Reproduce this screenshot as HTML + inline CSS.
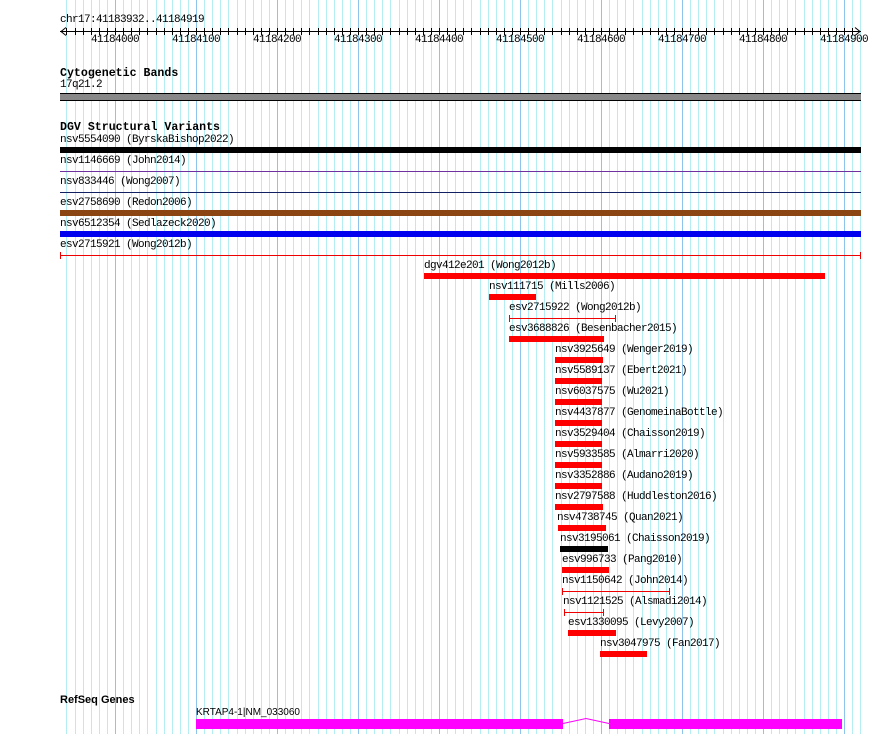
<!DOCTYPE html>
<html><head><meta charset="utf-8"><style>
body{margin:0;background:#fff;width:890px;height:734px;overflow:hidden;position:relative;font-family:"Liberation Mono",monospace;}
svg{position:absolute;left:0;top:0}
.t{position:absolute;font-size:11px;letter-spacing:-0.6px;line-height:11px;color:#000;white-space:pre}
.h{position:absolute;font-size:11.6px;font-weight:bold;line-height:12px;white-space:pre}
</style></head><body>
<svg id="s" width="890" height="734"></svg>
<div id="txt"></div>
<script>
var s=document.getElementById('s'),h='';
function L(x1,y1,x2,y2,c,w){h+='<line x1="'+x1+'" y1="'+y1+'" x2="'+x2+'" y2="'+y2+'" stroke="'+c+'" stroke-width="'+(w||1)+'"/>';}
function R(x,y,w,ht,c){h+='<rect x="'+x+'" y="'+y+'" width="'+w+'" height="'+ht+'" fill="'+c+'"/>';}
for(var k=-6;k<=92;k++){var x=Math.round(115+k*8.1)+0.5;if(x<60||x>862)continue;
 L(x,0,x,734,(k%10==0)?'#8cc4ec':'#b4eef2');}
L(60,31.5,861,31.5,'#000');
for(var k=-6;k<=92;k++){var x=Math.round(115+k*8.1)+0.5;if(x<62||x>860)continue;L(x,28,x,35,'#000');}
h+='<polyline points="66,27.5 61,31.5 66,35.5" fill="none" stroke="#000"/>';
h+='<polyline points="855,27.5 860,31.5 855,35.5" fill="none" stroke="#000"/>';
R(60,93,801,8,'#000');R(60,94,801,6,'#888');
var rows=[
[60,'nsv5554090 (ByrskaBishop2022)',60,861,'thick','#000'],
[60,'nsv1146669 (John2014)',60,861,'line','#7030a0'],
[60,'nsv833446 (Wong2007)',60,861,'line','#102060'],
[60,'esv2758690 (Redon2006)',60,861,'thick','#8b4513'],
[60,'nsv6512354 (Sedlazeck2020)',60,861,'thick','#0000ee'],
[60,'esv2715921 (Wong2012b)',60,861,'tick','#e00'],
[424,'dgv412e201 (Wong2012b)',424,825,'thick','#f00'],
[489,'nsv111715 (Mills2006)',489,536,'thick','#f00'],
[509,'esv2715922 (Wong2012b)',509,616,'tick','#e00'],
[509,'esv3688826 (Besenbacher2015)',509,604,'thick','#f00'],
[555,'nsv3925649 (Wenger2019)',555,603,'thick','#f00'],
[555,'nsv5589137 (Ebert2021)',555,602,'thick','#f00'],
[555,'nsv6037575 (Wu2021)',555,602,'thick','#f00'],
[555,'nsv4437877 (GenomeinaBottle)',555,602,'thick','#f00'],
[555,'nsv3529404 (Chaisson2019)',555,602,'thick','#f00'],
[555,'nsv5933585 (Almarri2020)',555,602,'thick','#f00'],
[555,'nsv3352886 (Audano2019)',555,602,'thick','#f00'],
[555,'nsv2797588 (Huddleston2016)',555,603,'thick','#f00'],
[557,'nsv4738745 (Quan2021)',558,606,'thick','#f00'],
[560,'nsv3195061 (Chaisson2019)',560,608,'thick','#000'],
[562,'esv996733 (Pang2010)',562,609,'thick','#f00'],
[562,'nsv1150642 (John2014)',562,670,'tick','#e00'],
[563,'nsv1121525 (Alsmadi2014)',564,604,'tick','#e00'],
[568,'esv1330095 (Levy2007)',568,616,'thick','#f00'],
[600,'nsv3047975 (Fan2017)',600,647,'thick','#f00']];
var t='';
rows.forEach(function(r,i){var y=147+21*i;
 t+='<div class="t" style="left:'+r[0]+'px;top:'+(y-12)+'px">'+r[1]+'</div>';
 if(r[4]=='thick')R(r[2],y,r[3]-r[2],6,r[5]);
 else if(r[4]=='line')L(r[2],y+3.5,r[3],y+3.5,r[5]);
 else{L(r[2],y+3.5,r[3],y+3.5,r[5]);L(r[2]+0.5,y,r[2]+0.5,y+7,r[5]);L(r[3]-0.5,y,r[3]-0.5,y+7,r[5]);}
});
R(196,719,367,10,'#f0f');R(609,719,233,10,'#f0f');
h+='<polyline points="563,723.5 586,718.5 609,723.5" fill="none" stroke="#f0f"/>';
s.innerHTML=h;
t+='<div class="t" style="left:60px;top:15px">chr17:41183932..41184919</div>';
var labs=['41184000','41184100','41184200','41184300','41184400','41184500','41184600','41184700','41184800','41184900'];
labs.forEach(function(l,i){t+='<div class="t" style="left:'+(115+i*81-24)+'px;top:35px">'+l+'</div>';});
t+='<div class="h" style="left:60px;top:68px">Cytogenetic Bands</div>';
t+='<div class="t" style="left:60px;top:80px">17q21.2</div>';
t+='<div class="h" style="left:60px;top:122px">DGV Structural Variants</div>';
t+='<div class="h" style="left:60px;top:694px;font-family:\'Liberation Sans\',sans-serif;font-size:11px">RefSeq Genes</div>';
t+='<div class="t" style="left:196px;top:707px;font-family:\'Liberation Sans\',sans-serif;font-size:10px;letter-spacing:0">KRTAP4-1|NM_033060</div>';
document.getElementById('txt').innerHTML=t;
</script>
</body></html>
